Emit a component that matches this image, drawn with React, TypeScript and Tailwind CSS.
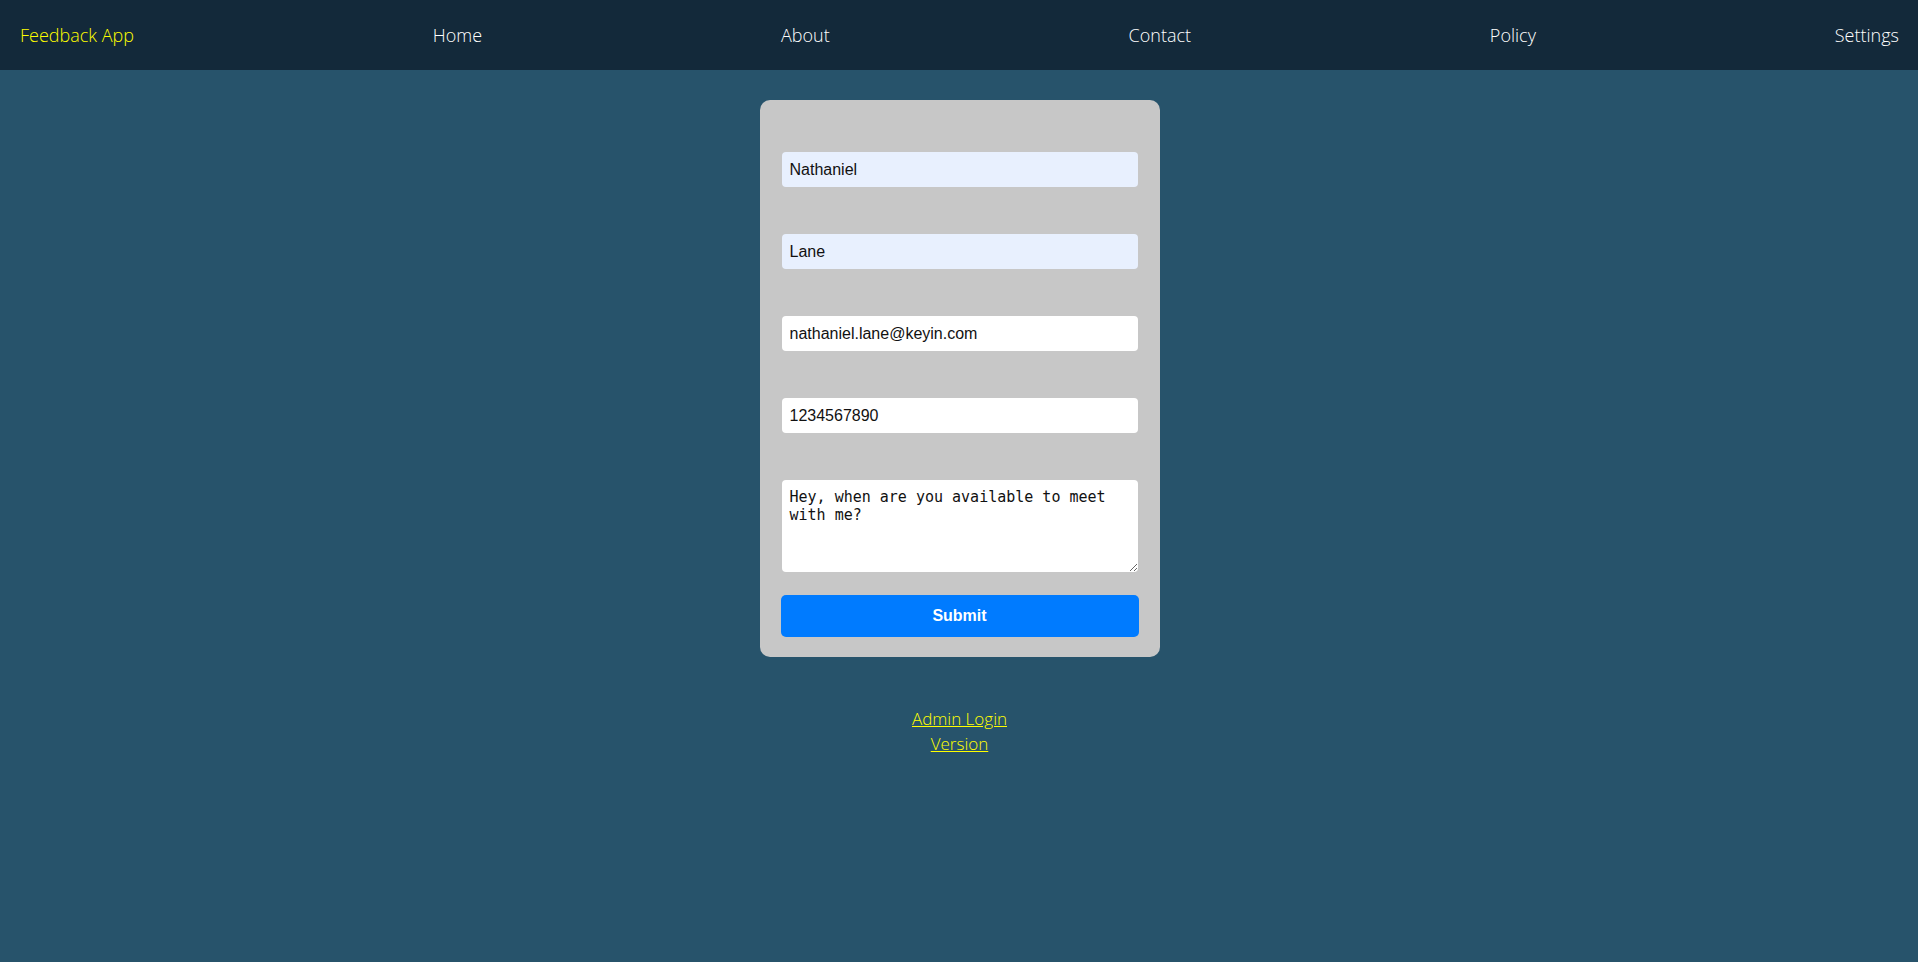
const navLinks = ["Home", "About", "Contact", "Policy", "Settings"];

export default function App() {
  return (
    <div className="min-h-screen bg-[#27536b] font-['Open_Sans',sans-serif]">
      <nav className="h-[70px] bg-[#13293a] flex items-center justify-between pl-5 pr-[19px] text-[18px] font-light">
        <a href="#" className="text-[#ffff00]">Feedback App</a>
        {navLinks.map((l) => (
          <a key={l} href="#" className="text-white">
            {l}
          </a>
        ))}
      </nav>

      <main className="flex flex-col items-center pt-[30px] pl-px">
        <form
          onSubmit={(e) => e.preventDefault()}
          className="w-[400px] bg-[#c7c7c7] rounded-[10px] pt-[52px] pb-[20px] px-[22px] flex flex-col font-['Liberation_Sans',Arial,sans-serif] text-[16px] text-[#111]"
        >
          <input
            type="text"
            defaultValue="Nathaniel"
            className="h-[35px] mb-[47px] px-2 rounded-[4px] bg-[#e8f0fe] outline-none"
          />
          <input
            type="text"
            defaultValue="Lane"
            className="h-[35px] mb-[47px] px-2 rounded-[4px] bg-[#e8f0fe] outline-none"
          />
          <input
            type="email"
            defaultValue="nathaniel.lane@keyin.com"
            className="h-[35px] mb-[47px] px-2 rounded-[4px] bg-white outline-none"
          />
          <input
            type="tel"
            defaultValue="1234567890"
            className="h-[35px] mb-[47px] px-2 rounded-[4px] bg-white outline-none"
          />
          <textarea
            defaultValue="Hey, when are you available to meet with me?"
            className="h-[92px] px-2 pt-2 pb-2 rounded-[4px] bg-white outline-none font-['DejaVu_Sans_Mono',monospace] text-[15px] leading-[18px]"
          />
          <button
            type="submit"
            className="mt-[23px] -mx-px h-[42px] rounded-[5px] bg-[#007bff] text-white font-bold text-[16px]"
          >
            Submit
          </button>
        </form>

        <div className="mt-[49px] flex flex-col items-center text-[17px] font-light leading-[25px]">
          <a href="#" className="text-[#ffff00] underline">Admin Login</a>
          <a href="#" className="text-[#ffff00] underline">Version</a>
        </div>
      </main>
    </div>
  );
}
